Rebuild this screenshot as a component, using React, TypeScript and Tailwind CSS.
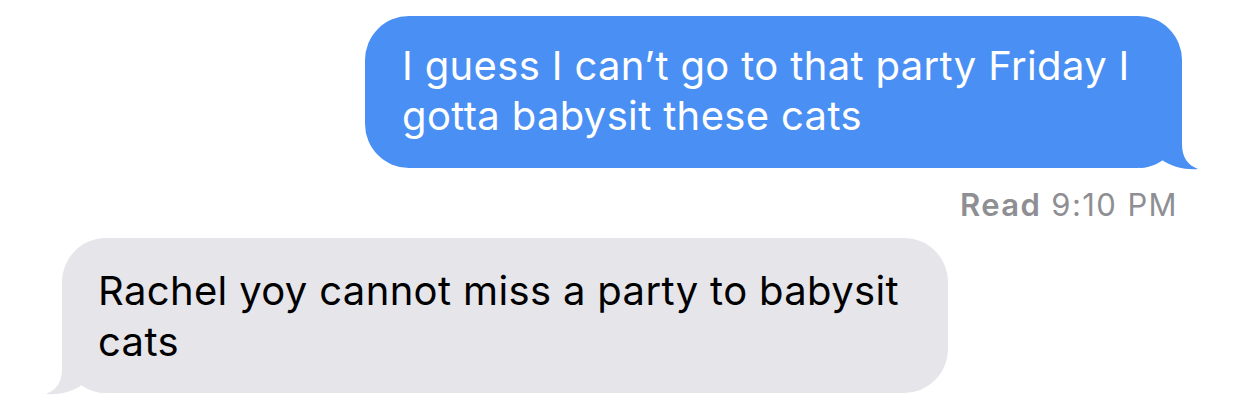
import React from "react";

function Tail({ color, side }: { color: string; side: "left" | "right" }) {
  return (
    <svg
      width="60"
      height="50"
      viewBox="0 0 60 50"
      className={
        side === "right"
          ? "absolute right-[-18px] bottom-[-2px]"
          : "absolute left-[-18px] bottom-[-2px] -scale-x-100"
      }
    >
      <path
        d="M0 48 L0 0 L42 0 L42 24 C42 38 48 45 58 49 C48 50 32 48 21 39 C14 45 7 48 0 48 Z"
        fill={color}
      />
    </svg>
  );
}

export default function App() {
  return (
    <div
      className="w-[1241px] h-[413px] bg-white flex flex-col overflow-hidden"
      style={{ fontFamily: "Inter, 'Noto Sans', sans-serif" }}
    >
      <div className="self-end mr-[59px] mt-[16px] relative w-[817px] h-[152px] rounded-[44px] bg-[#4a8ff4]">
        <Tail color="#4a8ff4" side="right" />
        <div className="relative pl-[37px] pt-[25px] text-white text-[40px] leading-[50px] tracking-[0.35px]">
          I guess I can’t go to that party Friday I
          <br />
          gotta babysit these cats
        </div>
      </div>
      <div className="self-end mr-[63px] mt-[19px] text-[31px] leading-[36px] tracking-[1.4px] text-[#8e8e93]">
        <span className="font-semibold">Read</span> 9:10 PM
      </div>
      <div className="self-start ml-[62px] mt-[15px] relative w-[886px] h-[155px] rounded-[44px] bg-[#e5e5ea]">
        <Tail color="#e5e5ea" side="left" />
        <div className="relative pl-[36px] pt-[27px] text-black text-[40px] leading-[51px] tracking-[0.35px]">
          Rachel yoy cannot miss a party to babysit
          <br />
          cats
        </div>
      </div>
    </div>
  );
}
